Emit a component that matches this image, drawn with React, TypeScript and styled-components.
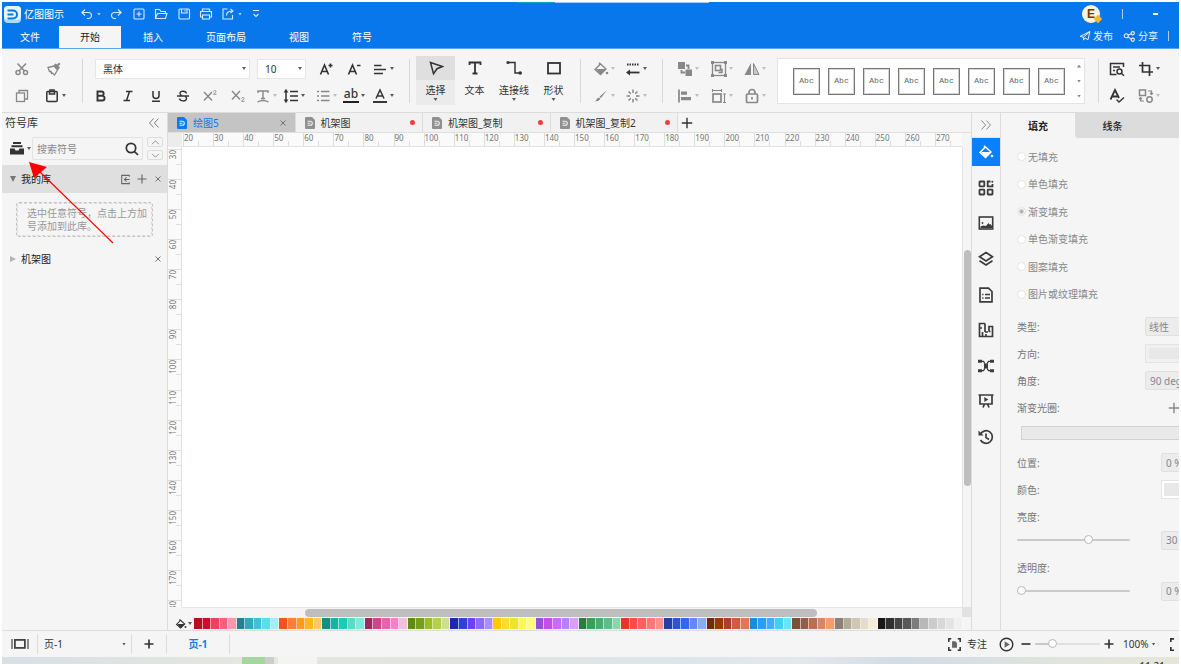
import React from "react";
import styled, { createGlobalStyle, css } from "styled-components";

const GlobalStyle = createGlobalStyle`
  *, *::before, *::after { box-sizing: border-box; }
  html, body, #root { height: 100%; }
  body {
    margin: 0;
    background: #fff;
    color: #333;
    font: 10px/14px "Noto Sans", "Noto Sans CJK SC", sans-serif;
    overflow: hidden;
  }
  button, input, select { font: inherit; color: inherit; margin: 0; padding: 0; border: 0; background: none; border-radius: 0; }
  select, input[type="radio"], input[type="range"] { appearance: none; }
  button { display: flex; align-items: center; justify-content: center; white-space: nowrap; }
  svg { display: block; flex: none; }
`;

/* ---------- icons ---------- */

type IconProps = { size?: number; w?: number; children: React.ReactNode };
const Icon = ({ size = 16, w = 1.4, children }: IconProps) => (
  <svg width={size} height={size} viewBox="0 0 16 16" fill="none" stroke="currentColor" strokeWidth={w} aria-hidden="true">
    {children}
  </svg>
);
const S = { fill: "currentColor", stroke: "none" };

const Undo = () => <Icon w={1.1}><path d="M6 3.5 2.8 6.5 6 9.5M3 6.5h6.5a3 3 0 0 1 0 6H8" /></Icon>;
const Redo = () => <Icon w={1.1}><path d="M10 3.5l3.2 3-3.2 3M13 6.5H6.500a3 3 0 0 0 0 6H8" /></Icon>;
const NewDoc = () => <Icon w={1.1}><rect x="3" y="3" width="10" height="10" rx="1" /><path d="M8 5.500v5M5.500 8h5" /></Icon>;
const Folder = () => <Icon w={1.1}><path d="M2.500 12.500v-9h4l1.500 2h4.500v2M2.500 12.500l2-5h9.500l-1.500 5z" /></Icon>;
const Save = () => <Icon w={1.1}><rect x="3" y="3" width="10.500" height="10" rx="1" /><path d="M5.500 3v4h5.500V3M9 4.200v1.400" /></Icon>;
const Print = () => <Icon w={1.1}><path d="M4.500 5.500V3h7v2.500M4.500 11H2.500V5.500h11V11h-2" /><rect x="4.500" y="9" width="7" height="4" /></Icon>;
const Export = () => <Icon w={1.1}><path d="M7.500 3H3v10h9.500V9M6.500 9.500c0-3 2-4.500 6-4.500M10.500 2.800 13 5l-2.500 2.200" /></Icon>;
const More = () => <Icon w={1.1}><path d="M5 4.500h6M5.500 8 8 10.500 10.500 8" /></Icon>;
const Send = () => <Icon size={12} w={1.3}><path d="M1.500 8.500 14.500 2l-2.500 11-4-2.500-2 3V9.500L14.500 2M1.500 8.500 6 9.500" /></Icon>;
const Share = () => <Icon size={13} w={1.3}><circle cx="4" cy="7" r="2.500" /><circle cx="12" cy="4" r="2" /><circle cx="12" cy="12" r="2" /><path d="M6.300 6.400 10 4.700M6 8.500l4.200 2.700" /></Icon>;

const Cut = () => <Icon w={1.500}><circle cx="4" cy="11.500" r="2" /><circle cx="11.500" cy="11.500" r="2" /><path d="M5 10 12 2.500M10.500 10 3.500 2.500" /></Icon>;
const Painter = () => <Icon w={1.3}><path d="M2 6.500 8 5l3.500 4-3 5-2-2-1 .5-.5-2-1.500 0z" /><path {...S} d="M7.500 4.500 12 9l2-2.500L12.500 5l2-2-1.500-1.500-2 2L9.500 2.500z" /></Icon>;
const Copy = () => <Icon w={1.3}><rect x="2.500" y="5" width="8" height="8.500" /><path d="M5 5V2.500h8.500V11h-3" /></Icon>;
const Paste = () => <Icon w={1.5}><rect x="2.800" y="3.500" width="10.400" height="10" rx="1" /><path d="M5.500 3.500V6h5V3.500M6 3.500V2h4v1.500" /></Icon>;
const FontUp = () => <Icon w={1.6}><path d="M2.500 13.500 6.500 4l4 9.500M4 10.500h5M10.500 4.500h4M12.500 2.500v4" /></Icon>;
const FontDown = () => <Icon w={1.6}><path d="M2.500 13.500 6.500 4l4 9.500M4 10.500h5M11 4.500h3.500" /></Icon>;
const AlignText = () => <Icon w={1.7}><path d="M2 4.500h7.500M2 8.500h12M2 12.500h9" /></Icon>;
const Bold = () => <Icon w={1.9}><path d="M4.500 3.500h4a2.100 2.100 0 0 1 0 4.300h-4zM4.500 7.800h4.700a2.300 2.300 0 0 1 0 4.700H4.500z" /></Icon>;
const Italic = () => <Icon w={1.5}><path d="M6 3.500h6.500M3.500 12.500H10M9.500 3.500l-3 9" /></Icon>;
const Underline = () => <Icon w={1.5}><path d="M5 3v4.500a3 3 0 0 0 6 0V3M4 13.200h8" /></Icon>;
const Strike = () => <Icon w={1.4}><path d="M11.500 5.500C11 2.500 5 2.500 5 5.200c0 1 .6 1.700 1.500 2.300M2 8h12M4.500 10.500c.5 3.200 7 3.200 7 .2 0-1-.5-1.700-1-2.200" /></Icon>;
const Super = () => <Icon w={1.4}><path d="M2 4l8 8.500M10 4l-8 8.500" /><path strokeWidth="0.900" d="M11.500 3.500c.3-1.400 2.800-1.200 2.500.3-.2.900-2.500 1.800-2.500 2.500h3" /></Icon>;
const Sub = () => <Icon w={1.4}><path d="M2 3l8 8.500M10 3l-8 8.500" /><path strokeWidth="0.900" d="M11.500 10.500c.3-1.400 2.800-1.200 2.500.3-.2.900-2.500 1.800-2.500 2.500h3" /></Icon>;
const TextArc = () => <Icon w={1.4}><path d="M3 5V3h10v2M8 3v7.500M6 10.500h4M2.500 14q5.500-3 11 0" /></Icon>;
const Spacing = () => <Icon w={1.500}><path d="M7 3.500h8M7 8h8M7 12.500h8M3 4v8" /><path {...S} d="M3 .8 5.300 4.500H.7zM3 15.200.7 11.500h4.600z" /></Icon>;
const Bullets = () => <Icon w={1.300}><path d="M6 3.500h8.500M6 8h8.500M6 12.500h8.500M2 3.500h2M2 8h2M2 12.500h2" /></Icon>;
const FontA = () => <Icon w={1.500}><path d="M4 10.500 8 2l4 8.500M5.500 8h5" /><path strokeWidth="1.800" stroke="#222" d="M1 14h14" /></Icon>;

const Cursor = () => <Icon w={1.500}><path d="M2.500 2.500l12 4-5.500 2.200-3.500 5z" /></Icon>;
const BigT = () => <Icon w={1.800}><path d="M2.500 5V2.500h11V5M8 2.500v11M5.500 13.500h5" /></Icon>;
const Connector = () => <Icon w={1.500}><path d="M3 2.500h6v10.500h4" /><circle cx="2" cy="2.500" r="1.600" {...S} /><circle cx="14.200" cy="13" r="1.800" {...S} /></Icon>;
const Shape = () => <Icon w={1.800}><rect x="2" y="3" width="12" height="10.500" /></Icon>;

const Bucket = ({ size = 16 }: { size?: number }) => (
  <Icon size={size} w={1.400}><path d="M6.500 1.500v3M7.500 3 2 8.500l5.500 5L13 8z" /><path {...S} d="M3 8h10l-5.500 5.500z" /><circle cx="14" cy="12" r="1.300" {...S} /></Icon>
);
const LineStyle = () => <Icon w={1.800}><path strokeDasharray="1.500 1" d="M2 3.500H14.500" /><path d="M4 11.500h10.500" /><path {...S} d="M1 11.500l4-3v6z" /></Icon>;
const Brush = () => <Icon w={1}><path {...S} d="M14 2 8 10 6.500 8.700zM6 9.500l1.300 1.300C6.500 13 4 13.500 2 13.500c1.500-1 2-4 4-4z" /></Icon>;
const Spark = () => <Icon w={1.500}><path d="M8 1.500v3.500M8 11v3.500M1.500 8H5M11 8h3.500M3.500 3.500l2.300 2.300M10.200 10.200l2.300 2.300M12.500 3.500l-2.300 2.300M5.800 10.200l-2.300 2.300" /></Icon>;
const Arrange = () => <Icon w={1.800}><rect x="1" y="1" width="7" height="7" {...S} /><path d="M9 4.500h2.500v3.500M4.500 9v2.500h3.500" /><rect x="8.500" y="8.500" width="6.500" height="6.500" {...S} /></Icon>;
const GroupIcon = () => <Icon w={1.300}><rect x="1.500" y="1.500" width="13" height="13" /><rect x="4.500" y="4.500" width="5" height="5" strokeWidth="1.600" /><path strokeWidth="1.600" d="M11 7.500v4H7.500" /><path {...S} d="M0 0h3v3H0zM13 0h3v3h-3zM0 13h3v3H0zM13 13h3v3h-3z" /></Icon>;
const Mirror = () => <Icon w={1}><path d="M9.500 2.500V13.500h5.500z" fill="currentColor" fillOpacity="0.400" /><path {...S} d="M7 2v12H.5z" /></Icon>;
const AlignShape = () => <Icon w={1.700}><path d="M2 1.500v13" /><path {...S} d="M4 3.500h6v3.200H4zM4 9h10v3.200H4z" /></Icon>;
const SizeIcon = () => <Icon w={1.700}><rect x="2" y="6" width="8" height="8" /><path strokeWidth="1.100" d="M1.500 2.500h9M1.500 1v3M10.500 1v3M13.500 6v8.500M12 6h3M12 14.500h3" /></Icon>;
const LockIcon = () => <Icon w={1.700}><rect x="2.500" y="6" width="11" height="8.500" rx="1" /><path d="M5 6V4.500a3 3 0 0 1 6 0V6" /><path d="M8 9v2.500" /></Icon>;
const FindIcon = () => <Icon w={1.500}><path d="M14.500 6V2.500h-13v11h6M4 6h7M4 9.500h2M12.500 12.500l2.500 2.200" /><circle cx="10.500" cy="10.500" r="2.500" /></Icon>;
const Crop = () => <Icon w={1.700}><path d="M4.500 1v10H15M1 4.500h10.500V15" /></Icon>;
const Spell = () => <Icon w={1.800}><path d="M1.500 11.500 6 2l4 8M3.500 8.500h5" /><path strokeWidth="1.400" d="M7.500 11.500l2.500 2.500 5-4.500" /></Icon>;
const Replace = () => <Icon w={1.500}><rect x="1.500" y="2" width="6" height="5.500" /><circle cx="11.500" cy="11.500" r="2.700" /><path d="M10 3h3.500v3.500M12 5l1.500 1.500L15 5M6 13H2.500V9.500M1 11l1.500-1.500L4 11" strokeWidth="1.200" /></Icon>;

const Library = () => <Icon><path {...S} d="M4 1h8v2H4zM2.500 4.200h11v2h-11zM1 7.500h4.500L6.500 9.500h3L10.500 7.500H15V13.500H1z" /></Icon>;
const Search = () => <Icon w={1.700}><circle cx="7" cy="7" r="4.700" /><path d="M10.300 10.300 14 14" /></Icon>;
const Import = () => <Icon size={11} w={1.500}><path d="M13.500 4V2h-11v12h11v-2M14 8H7M9.500 5 6.500 8l3 3" /></Icon>;
const Plus = ({ size = 12, w = 1.600 }: { size?: number; w?: number }) => <Icon size={size} w={w}><path d="M8 2v12M2 8h12" /></Icon>;
const Minus = () => <Icon size={12} w={2.200}><path d="M2 8h12" /></Icon>;
const Close = () => <Icon size={10} w={1.400}><path d="M4 4l8 8M12 4l-8 8" /></Icon>;
const Collapse = () => <Icon size={12} w={1.300}><path d="M7.500 2 2 8l5.500 6M14 2 8.500 8l5.500 6" /></Icon>;
const Expand = () => <Icon size={12} w={1.300}><path d="M2 2l5.500 6L2 14M8.500 2 14 8l-5.500 6" /></Icon>;
const Up = () => <Icon size={9} w={1.600}><path d="M2 11l6-6 6 6" /></Icon>;
const Down = () => <Icon size={9} w={1.600}><path d="M2 5l6 6 6-6" /></Icon>;
const DocIcon = () => (
  <svg width="10" height="12" viewBox="0 0 10 12" aria-hidden="true">
    <path fill="currentColor" d="M1 0h6l3 3v8a1 1 0 0 1-1 1H1a1 1 0 0 1-1-1V1a1 1 0 0 1 1-1z" />
    <path fill="none" stroke="#f0f0f0" strokeWidth="1.100" d="M2.500 4.200h2.800a1.900 1.900 0 0 1 0 4H2.500M2.500 6.200h2.800" />
  </svg>
);

const GridIcon = () => <Icon w={1.800}><rect x="1.500" y="1.500" width="4.800" height="4.800" rx=".5" /><rect x="1.500" y="9.700" width="4.800" height="4.800" rx=".5" /><rect x="9.700" y="9.700" width="4.800" height="4.800" rx=".5" /><path d="M12.500 1.500H9.700v4.800h4.800V4" /><circle cx="14.300" cy="1.800" r="1" {...S} /></Icon>;
const Picture = () => <Icon w={1.600}><rect x="1.300" y="2" width="13.400" height="12" /><path {...S} d="M2.500 13v-1.500l2.500-1 3 .5 2.500-3 1 1.500 1-.5 1.500 2v2z" /><circle cx="4.500" cy="8" r=".9" {...S} /></Icon>;
const Layers = () => <Icon w={1.700}><path d="M8 1.500 14.500 5.700 8 10 1.500 5.700zM1.500 9.800 8 14l6.500-4.200" /></Icon>;
const Page = () => <Icon w={1.700}><path d="M2 1.200h8.500L14 4.500v10.300H2z" /><path d="M7 7.500h5M7 11h5M4.200 7.500h1.300M4.200 11h1.300" strokeWidth="1.400" /></Icon>;
const FloorPlan = () => <Icon w={1.700}><path d="M7 1.500H1.500v13h13V4.500H11v5M7 1.500V10M1.500 6H4M4.500 14v-4M7 10h3M11 9.500h1.500M8 14v-2" /></Icon>;
const Mind = () => <Icon w={1.300}><path d="M3 3.300h2.500l2.500 4 2.500-4H13M3 12.700h2.500l2.500-4 2.500 4H13" /><path {...S} d="M0 1.800h4v3H0zM12 1.800h4v3h-4zM0 11.200h4v3H0zM12 11.200h4v3h-4zM6 6h4v4H6z" /></Icon>;
const Present = () => <Icon w={1.700}><path d="M.5 2h15M2 2v9h12V2M5 14.500 6.500 11M11 14.500 9.500 11" /><path {...S} d="M6.300 4l4 2.500-4 2.500z" /></Icon>;
const History = () => <Icon w={1.700}><path d="M2.500 5a6.300 6.300 0 1 1 0 6M8 4.500V8.500l3 2" /><path {...S} d="M.5 1.500v5h5z" /></Icon>;

const Pages = () => <svg width="18" height="12" viewBox="0 0 18 12" fill="none" stroke="#444" aria-hidden="true"><rect x="3.900" y="1.900" width="10" height="8" strokeWidth="1.800" /><path d="M1 1v10M17 1v10" strokeWidth="1.200" /></svg>;
const Focus = () => <Icon size={13} w={1.900}><path d="M1 5V1h3M12 1h3v4M15 11v4h-3M4 15H1v-4" /><path {...S} fill="#666" d="M5 4h4l2 2v6H5z" /></Icon>;
const PlayIcon = () => <Icon size={15} w={1.500}><circle cx="8" cy="8" r="6.700" /><path {...S} fill="#666" d="M6 4.500l5.500 3.500L6 11.500z" /></Icon>;
const FullScreen = () => <Icon size={13} w={2}><path d="M1 5V1h4M11 1h4v4M15 11v4h-4M5 15H1v-4" /></Icon>;

const Caret = styled.i<{ $up?: boolean; $dim?: boolean }>`
  flex: none;
  width: 6px;
  height: 3px;
  background: ${(p) => (p.$dim ? "#b0b0b0" : "currentColor")};
  opacity: 0.8;
  clip-path: ${(p) => (p.$up ? "polygon(1px 3px, 3px 0, 5px 3px)" : "polygon(1px 0, 5px 0, 3px 3px)")};
`;

/* ---------- shell ---------- */

const Shell = styled.div`
  position: relative;
  display: flex;
  flex-direction: column;
  height: 100%;
  padding: 2px 2px 0;
  overflow: hidden;
`;

const Header = styled.header`
  position: relative;
  display: flex;
  justify-content: space-between;
  background: #0977ec;
  color: #fff;
  border-bottom: 1px solid #5ba4f3;
  overflow: hidden;
`;
const Progress = styled.div`
  position: absolute;
  top: 0;
  left: 515px;
  width: 192px;
  height: 1px;
  background: linear-gradient(90deg, #0ea5c8 38px, #a9cbf5 38px);
`;
const TitleRow = styled.div`
  display: flex;
  align-items: center;
  height: 24px;
  padding-left: 2px;
`;
const AppName = styled.span`
  width: 55px;
  margin-left: 3px;
`;
const Quick = styled.div`
  display: grid;
  grid-template-columns: 29px 23px 22px 23px 22px 22px 28px 16px;
  color: #d9e9fd;
`;
const RibbonTabs = styled.nav`
  display: flex;
  gap: 1px;
  height: 22px;
`;
const RibbonTab = styled.button<{ $on?: boolean }>`
  height: 22px;
  padding: 0 21px;
  &:first-child { padding: 0 18px; }
  ${(p) => p.$on && css`background: #f5f5f5; color: #222;`}
`;
const Account = styled.div`
  width: 100px;
`;
const AccountRow = styled.div`
  display: flex;
  align-items: center;
  height: 24px;
  padding-left: 3px;
  & + & { height: 20px; padding-left: 0; gap: 2px; }
`;
const Avatar = styled.span`
  position: relative;
  width: 18px;
  height: 18px;
  border-radius: 50%;
  background: #fdf3da;
  color: #6a3d08;
  font: bold 12px/18px "Liberation Sans", sans-serif;
  text-align: center;
`;
const Badge = styled.i`
  position: absolute;
  right: -1px;
  bottom: 1px;
  width: 6px;
  height: 6px;
  background: #fdb92e;
  transform: rotate(45deg);
`;
const Bar = styled.i<{ $gap: number }>`
  width: 1px;
  height: 10px;
  margin-left: ${(p) => p.$gap}px;
  background: #a9cdf8;
`;
const Minimize = styled.button`
  width: 5px;
  height: 2px;
  margin-left: 30px;
  background: #fff;
`;
const LinkButton = styled.button`
  gap: 2px;
  margin-right: 8px;
  color: #e8f2fe;
`;

/* ---------- ribbon ---------- */

const Ribbon = styled.div`
  display: flex;
  flex: none;
  height: 64px;
  background: #f5f5f5;
  border-bottom: 1px solid #dcdcdc;
  overflow: hidden;
`;
const Group = styled.section<{ $l: number; $r: number }>`
  display: flex;
  flex: none;
  flex-direction: column;
  gap: 6px;
  padding: 9px ${(p) => p.$r}px 0 ${(p) => p.$l}px;
`;
const Sep = styled.i`
  flex: none;
  width: 1px;
  height: 44px;
  margin-top: 10px;
  background: #d8d8d8;
`;
const ToolRow = styled.div<{ $cols: string }>`
  display: grid;
  align-items: center;
  height: 21px;
  grid-template-columns: ${(p) => p.$cols};
`;
const ToolButton = styled.button<{ $dim?: boolean }>`
  justify-content: flex-start;
  gap: 1px;
  height: 20px;
  color: ${(p) => (p.$dim ? "#888" : "inherit")};
`;
const Highlight = styled.span`
  width: 16px;
  height: 15px;
  border-bottom: 2px solid #222;
  font-size: 12px;
  line-height: 12px;
  font-weight: 500;
  text-align: center;
`;
const Picker = styled.label`
  display: flex;
  align-items: center;
  height: 20px;
  margin: 0 7px 0 2px;
  padding: 0 2px 0 7px;
  background: #fff;
  border: 1px solid #e6e6e6;
  select { flex: 1; min-width: 0; }
  & + & { margin: 0 12px 0 0; }
`;
const BigTools = styled.div`
  display: grid;
  grid-template-columns: 39px 39px 40px 39px;
  margin: 7px 7px 0 6px;
  flex: none;
`;
const BigTool = styled.button<{ $on?: boolean }>`
  flex-direction: column;
  justify-content: flex-start;
  height: 49px;
  ${(p) => p.$on && css`background: linear-gradient(#dfdfdf 24px, #ebebeb 24px);`}
  svg { margin: 4px 0; }
  span { margin: 3px 0 1px; line-height: 14px; }
`;
const Gallery = styled.div`
  display: flex;
  flex: none;
  align-items: center;
  gap: 8px;
  width: 308px;
  height: 46px;
  margin: 9px 13px 0 0;
  padding-left: 15px;
  background: #fff;
  border: 1px solid #e4e4e4;
`;
const StyleBox = styled.button`
  width: 27px;
  height: 27px;
  border: 1px solid #777;
  outline: 1px solid #d4d4d4;
  outline-offset: -2px;
  color: #666;
  font: 8px/12px "Liberation Mono", monospace;
`;
const GalleryNav = styled.div`
  display: flex;
  flex-direction: column;
  gap: 12px;
  margin-left: 3px;
  color: #666;
`;

const Tool = ({ icon, caret, dim, label }: { icon: React.ReactNode; caret?: boolean; dim?: boolean; label: string }) => (
  <ToolButton $dim={dim} aria-label={label}>
    {icon}
    {caret && <Caret $dim={dim} />}
  </ToolButton>
);

/* ---------- body ---------- */

const Body = styled.main`
  display: flex;
  flex: 1;
  min-height: 0;
`;
const Side = styled.aside`
  display: flex;
  flex: none;
  flex-direction: column;
  width: 166px;
  background: #f5f5f5;
  border-right: 1px solid #dcdcdc;
`;
const SideHead = styled.div`
  display: flex;
  align-items: center;
  justify-content: space-between;
  height: 19px;
  padding: 0 7px 0 3px;
  font-size: 11px;
  button { color: #777; }
`;
const SearchRow = styled.div`
  display: flex;
  align-items: center;
  height: 33px;
  padding: 0 4px 0 7px;
`;
const SearchBox = styled.label`
  display: flex;
  align-items: center;
  width: 111px;
  height: 23px;
  padding: 0 2px 0 4px;
  border: 1px solid #e2e2e2;
  border-radius: 2px;
  input { flex: 1; min-width: 0; outline: 0; }
  input::placeholder { color: #888; }
`;
const Stepper = styled.div`
  display: grid;
  gap: 3px;
  margin-left: auto;
  button { width: 16px; height: 10px; border: 1px solid #ddd; border-radius: 2px; color: #888; }
`;
const LibRow = styled.div<{ $on?: boolean }>`
  display: flex;
  align-items: center;
  height: 28px;
  padding: 0 4px 0 8px;
  gap: 5px;
  color: #222;
  background: ${(p) => (p.$on ? "#dfdfdf" : "transparent")};
  span { margin-right: auto; }
  button { color: #666; }
`;
const Twist = styled.i<{ $open?: boolean }>`
  width: 6px;
  height: 6px;
  background: ${(p) => (p.$open ? "#777" : "#b4b4b4")};
  clip-path: ${(p) => (p.$open ? "polygon(0 0, 100% 0, 50% 100%)" : "polygon(0 0, 100% 50%, 0 100%)")};
`;
const DropHint = styled.p`
  margin: 9px 14px 8px;
  padding: 4px 0 3px 10px;
  border: 1px dashed #c4c4c4;
  outline: 1px dashed #dadada;
  outline-offset: -2px;
  border-radius: 3px;
  color: #999;
  line-height: 13px;
  white-space: nowrap;
`;
const Pointer = styled.svg`
  position: absolute;
  left: 28px;
  top: 160px;
`;

const Center = styled.section`
  display: flex;
  flex: 1;
  flex-direction: column;
  min-width: 0;
  background: #f5f5f5;
`;
const DocTabs = styled.div`
  display: flex;
  flex: none;
  height: 20px;
  border-bottom: 1px solid #e0e0e0;
`;
const TabStrip = styled.div`
  display: grid;
  width: 510px;
  grid-template-columns: repeat(4, 1fr);
`;
const DocTab = styled.button<{ $on?: boolean }>`
  justify-content: flex-start;
  gap: 6px;
  padding: 0 7px 0 9px;
  border-right: 1px solid #dcdcdc;
  background: ${(p) => (p.$on ? "#c4c4c4" : "#f1f1f1")};
  color: ${(p) => (p.$on ? "#0a7bf2" : "#333")};
  svg { color: ${(p) => (p.$on ? "#0a7bf2" : "#909090")}; }
  svg:last-child { color: #666; }
  span { margin-right: auto; }
`;
const Dirty = styled.i`
  width: 5px;
  height: 5px;
  border-radius: 50%;
  background: #f93a3a;
`;
const AddTab = styled.button`
  width: 18px;
`;
const Stage = styled.div`
  display: grid;
  flex: 1;
  min-height: 0;
  grid-template: 14px 1fr 10px / 14px 1fr 9px;
`;
const Corner = styled.i<{ $c: string }>`
  background: ${(p) => p.$c};
`;
const HRuler = styled.div`
  overflow: hidden;
  background: #fafafa;
  border-bottom: 1px solid #e2e2e2;
  color: #777;
  font-size: 8px;
  line-height: 10px;
`;
const HTrack = styled.div`
  display: grid;
  width: 783px;
  height: 100%;
  padding-left: 1px;
  grid-template-columns: repeat(26, 1fr);
`;
const HCell = styled.span`
  border-left: 1px solid #ddd;
  background: linear-gradient(#ddd, #ddd) 14px 100% / 1px 5px no-repeat;
`;
const VRuler = styled(HRuler)`
  border-bottom: 0;
  border-right: 1px solid #e2e2e2;
`;
const VTrack = styled.div`
  display: grid;
  height: 483px;
  padding-top: 2px;
  grid-template-rows: repeat(16, 1fr);
`;
const VCell = styled.span`
  display: flex;
  align-items: flex-start;
  border-top: 1px solid #ddd;
  background: linear-gradient(#ddd, #ddd) 100% 14px / 5px 1px no-repeat;
  b { font-weight: normal; writing-mode: vertical-rl; transform: rotate(180deg); }
`;
const VScroll = styled.div`
  padding: 103px 0 0 1px;
  border-left: 1px solid #e2e2e2;
  i { display: block; height: 236px; border-radius: 4px; background: #bebebe; }
`;
const HScroll = styled.div`
  padding: 1px 145px 1px 123px;
  border-top: 1px solid #e6e6e6;
  i { display: block; height: 8px; border-radius: 4px; background: #bebebe; }
`;
const Palette = styled.div`
  display: flex;
  align-items: center;
  flex: none;
  height: 13px;
  padding: 0 8px 0 7px;
`;
const PaletteButton = styled.button`
  width: 19px;
  justify-content: flex-start;
`;
const Swatches = styled.div`
  display: flex;
  flex: 1;
`;
const Swatch = styled.button<{ $c: string }>`
  flex: 1;
  height: 11px;
  background: ${(p) => p.$c};
  border-right: 1px solid rgba(255, 255, 255, 0.6);
`;

/* ---------- right side ---------- */

const Strip = styled.nav`
  flex: none;
  width: 30px;
  background: #f5f5f5;
  border: solid #dcdcdc;
  border-width: 0 1px;
`;
const StripHead = styled.button`
  width: 100%;
  height: 25px;
  color: #888;
  border-bottom: 1px solid #e4e4e4;
`;
const StripList = styled.div`
  display: flex;
  flex-direction: column;
  justify-content: space-between;
  height: 313px;
  color: #3c3c3c;
`;
const StripButton = styled.button<{ $on?: boolean }>`
  height: 28px;
  background: ${(p) => (p.$on ? "#0a80ff" : "none")};
  color: ${(p) => (p.$on ? "#fff" : "inherit")};
`;
const Panel = styled.aside`
  flex: none;
  width: 178px;
  overflow: hidden;
  background: #f5f5f5;
  color: #888;
`;
const PanelTabs = styled.div`
  display: grid;
  width: 225px;
  height: 25px;
  grid-template-columns: 74px 75px 76px;
`;
const PanelTab = styled.button<{ $on?: boolean }>`
  color: #222;
  font-weight: ${(p) => (p.$on ? 700 : 500)};
  background: ${(p) => (p.$on ? "#f5f5f5" : "#dcdcdc")};
  &:nth-child(2) { border-bottom-left-radius: 3px; }
`;
const PanelBody = styled.div`
  width: 225px;
  padding: 5px 16px 0;
`;
const Radios = styled.div`
  display: grid;
  height: 165px;
  margin-bottom: 5px;
  grid-template-rows: repeat(6, 1fr);
`;
const Radio = styled.label`
  display: flex;
  align-items: center;
  gap: 2px;
  input {
    width: 9px;
    height: 9px;
    border: 1px solid #e4e4e4;
    border-radius: 50%;
    background: #fff;
  }
  input:checked { background: radial-gradient(#b0b0b0 1px, #f5f5f5 3px); }
`;
const Field = styled.div<{ $narrow?: boolean; $slider?: boolean }>`
  display: grid;
  align-items: center;
  height: ${(p) => (p.$slider ? 20 : 27)}px;
  margin-bottom: ${(p) => (p.$slider ? 4 : 0)}px;
  grid-template-columns: ${(p) => (p.$narrow || p.$slider ? "144px 49px" : "128px 65px")};
  input[type="range"] { width: 113px; }
  input[type="text"], select {
    height: 19px;
    padding: 0 4px;
    min-width: 0;
    width: 100%;
    border: 1px solid #e0e0e0;
    border-radius: 2px;
    background: #ececec;
  }
  select { padding: 0 3px; }
`;
const FieldLabel = styled.label`
  color: #777;
`;
const Preview = styled.button<{ $white?: boolean }>`
  height: 19px;
  border: ${(p) => (p.$white ? "3px solid #fff" : "4px solid #f0f0f0")};
  outline: 1px solid #e4e4e4;
  outline-offset: -1px;
  background: #e8e8e8;
`;
const AddStop = styled.button`
  justify-content: flex-start;
  padding-left: 6px;
`;
const StopBar = styled.div`
  height: 14px;
  margin: 5px 0 9px 4px;
  border: 1px solid #d2d2d2;
  background: #e9e9e9;
`;
const Range = styled.input<{ $zoom?: boolean }>`
  display: block;
  height: 12px;
  &::-webkit-slider-runnable-track {
    height: 2px;
    border-radius: 1px;
    background: ${(p) => (p.$zoom ? "linear-gradient(90deg, #c8c8c8 25%, #e0e0e0 25%)" : "#cacaca")};
  }
  &::-webkit-slider-thumb {
    appearance: none;
    width: 9px;
    height: 9px;
    margin-top: -4px;
    border: 1px solid #b8b8b8;
    border-radius: 50%;
    background: #fff;
  }
`;

/* ---------- footer ---------- */

const Status = styled.footer`
  display: flex;
  flex: none;
  align-items: center;
  height: 27px;
  background: #f5f5f5;
  border-top: 1px solid #dcdcdc;
  overflow: hidden;
`;
const Cell = styled.div<{ $w: number }>`
  display: flex;
  align-items: center;
  justify-content: center;
  width: ${(p) => p.$w}px;
  height: 20px;
  border-right: 1px solid #dcdcdc;
`;
const PageSelect = styled(Cell)`
  padding: 0 4px 0 6px;
  select { flex: 1; min-width: 0; }
`;
const PageTab = styled.button`
  color: #0a7bf2;
  font-weight: 700;
`;
const StatusRight = styled.div`
  display: flex;
  flex: none;
  align-items: center;
  width: 231px;
  margin-left: auto;
  button { flex: none; }
`;
const FocusButton = styled.button`
  gap: 6px;
  margin-right: 12px;
`;
const ZoomOut = styled.button`
  margin-left: 6px;
`;
const ZoomRange = styled(Range)`
  width: 65px;
  margin: 0 3px;
`;
const ZoomLevel = styled.button`
  gap: 2px;
  margin: 0 14px 0 8px;
`;
const Taskbar = styled.div`
  display: flex;
  flex: none;
  justify-content: space-between;
  height: 7px;
  overflow: hidden;
  background: linear-gradient(90deg, #d8e0e4, #e4e6e0 20%, #e2e4e0 40%, #dce6ea 58%, #e4e8ea 68%, #d2dce6 76%, #e0e4dc 90%, #e6e6da);
`;
const Tasks = styled.div`
  width: 75px;
  margin-left: 240px;
  background: linear-gradient(90deg, #a5d6a0 23px, #cdcdcb 23px 32px, #e6e8e4 32px 36px, #f4f4f3 36px);
`;
const Clock = styled.time`
  margin-right: 14px;
  padding-top: 2px;
  color: #222;
`;

const palette = [
  "#b31020 #cf0a30 #ee4060 #f66080 #f79aac",
  "#24808f #36a5c0 #40bedb #5cdcf0 #a0f0fa",
  "#f4511e #ff7d37 #ff9a1e #ffb81c #ffc860",
  "#109080 #14b5a0 #18cdb5 #60d8c8 #80e8dc",
  "#9c2a60 #c84890 #e465ac #f880c8 #f0c0dc",
  "#5f8a14 #789e20 #9abc28 #b4d04c #d0de90",
  "#1c28b0 #3040d8 #6c40f4 #8c6cf8 #a890fa",
  "#ffca00 #ffdb2c #eee428 #fcf84c #fcfc80",
  "#9850d8 #c050e8 #cc68fc #b880fc #d8a0fc",
  "#2a7c40 #38a055 #4cac70 #60bc88 #90d4a8",
  "#ea3428 #ff4a40 #ff6060 #ff7878 #ff9088",
  "#2440a4 #2c54d0 #3068f4 #6488fc #88acf0",
  "#702c00 #983800 #a84028 #d05c40 #e07858",
  "#1c8cd8 #2c9cf4 #44acfc #40d0fc #68e4fc",
  "#7c5038 #985c44 #b87050 #d88860 #f49c6c",
  "#8c8078 #b0ac98 #ccc8b4 #e4dccc #f4ecd8",
  "#181818 #303030 #444444 #585858 #7c7c7c",
  "#b8b8b8 #cccccc #d8d8d8 #e4e4e4 #f0f0f0",
].flatMap((row) => row.split(" "));

const fills = ["无填充", "单色填充", "渐变填充", "单色渐变填充", "图案填充", "图片或纹理填充"];
const docs = ["机架图", "机架图_复制", "机架图_复制2"];
const steps = (from: number, count: number) => Array.from({ length: count }, (_, i) => from + i * 10);
const panels: [string, React.ReactNode][] = [
  ["填充", <Bucket key="i" />], ["符号", <GridIcon key="i" />], ["图片", <Picture key="i" />],
  ["图层", <Layers key="i" />], ["页面", <Page key="i" />], ["平面图", <FloorPlan key="i" />],
  ["导图", <Mind key="i" />], ["演示", <Present key="i" />], ["历史", <History key="i" />],
];

export default function App() {
  return (
    <Shell>
      <GlobalStyle />
      <Header>
        <Progress />
        <div>
          <TitleRow>
            <svg width="17" height="17" viewBox="0 0 17 17" fill="none" aria-hidden="true">
              <rect width="17" height="17" rx="4" fill="#a8dcff" />
              <rect width="17" height="14" rx="4" fill="#e6f5ff" />
              <path d="M3.500 4.500H9a4 4 0 0 1 0 8H3.500M3.500 8.500h6" stroke="#0977ec" strokeWidth="2" />
            </svg>
            <AppName>亿图图示</AppName>
            <Quick>
              <Tool label="撤销" icon={<Undo />} caret />
              <Tool label="重做" icon={<Redo />} />
              <Tool label="新建" icon={<NewDoc />} />
              <Tool label="打开" icon={<Folder />} />
              <Tool label="保存" icon={<Save />} />
              <Tool label="打印" icon={<Print />} />
              <Tool label="导出" icon={<Export />} caret />
              <Tool label="更多" icon={<More />} />
            </Quick>
          </TitleRow>
          <RibbonTabs>
            <RibbonTab>文件</RibbonTab>
            <RibbonTab $on>开始</RibbonTab>
            <RibbonTab>插入</RibbonTab>
            <RibbonTab>页面布局</RibbonTab>
            <RibbonTab>视图</RibbonTab>
            <RibbonTab>符号</RibbonTab>
          </RibbonTabs>
        </div>
        <Account>
          <AccountRow>
            <Avatar>E<Badge /></Avatar>
            <Bar $gap={22} />
            <Minimize aria-label="最小化" />
          </AccountRow>
          <AccountRow>
            <LinkButton><Send />发布</LinkButton>
            <LinkButton><Share />分享</LinkButton>
            <Bar $gap={0} />
          </AccountRow>
        </Account>
      </Header>

      <Ribbon>
        <Group $l={12} $r={12}>
          <ToolRow $cols="32px 24px">
            <Tool label="剪切" icon={<Cut />} dim />
            <Tool label="格式刷" icon={<Painter />} dim />
          </ToolRow>
          <ToolRow $cols="30px 26px">
            <Tool label="复制" icon={<Copy />} dim />
            <Tool label="粘贴" icon={<Paste />} caret />
          </ToolRow>
        </Group>
        <Sep />
        <Group $l={10} $r={14}>
          <ToolRow $cols="164px 61px 28px 26px 23px">
            <Picker>
              <select aria-label="字体"><option>黑体</option></select><Caret />
            </Picker>
            <Picker>
              <select aria-label="字号"><option>10</option></select><Caret />
            </Picker>
            <Tool label="增大字号" icon={<FontUp />} />
            <Tool label="减小字号" icon={<FontDown />} />
            <Tool label="对齐" icon={<AlignText />} caret />
          </ToolRow>
          <ToolRow $cols="27px 28px 27px 27px 28px 25px 28px 32px 28px 29px 23px">
            <Tool label="加粗" icon={<Bold />} />
            <Tool label="斜体" icon={<Italic />} />
            <Tool label="下划线" icon={<Underline />} />
            <Tool label="删除线" icon={<Strike />} />
            <Tool label="上标" icon={<Super />} dim />
            <Tool label="下标" icon={<Sub />} dim />
            <Tool label="弧形文字" icon={<TextArc />} dim caret />
            <Tool label="行距" icon={<Spacing />} caret />
            <Tool label="项目符号" icon={<Bullets />} dim caret />
            <Tool label="突出显示" icon={<Highlight>ab</Highlight>} caret />
            <Tool label="字体颜色" icon={<FontA />} caret />
          </ToolRow>
        </Group>
        <Sep />
        <BigTools>
          <BigTool $on><Cursor /><span>选择</span><Caret /></BigTool>
          <BigTool><BigT /><span>文本</span></BigTool>
          <BigTool><Connector /><span>连接线</span><Caret /></BigTool>
          <BigTool><Shape /><span>形状</span><Caret /></BigTool>
        </BigTools>
        <Sep />
        <Group $l={12} $r={14}>
          <ToolRow $cols="32px 23px">
            <Tool label="填充" icon={<Bucket />} dim caret />
            <Tool label="线型" icon={<LineStyle />} caret />
          </ToolRow>
          <ToolRow $cols="32px 23px">
            <Tool label="画笔" icon={<Brush />} dim caret />
            <Tool label="效果" icon={<Spark />} dim caret />
          </ToolRow>
        </Group>
        <Sep />
        <Group $l={14} $r={10}>
          <ToolRow $cols="34px 33px 23px">
            <Tool label="排列" icon={<Arrange />} dim caret />
            <Tool label="组合" icon={<GroupIcon />} dim caret />
            <Tool label="翻转" icon={<Mirror />} dim caret />
          </ToolRow>
          <ToolRow $cols="34px 33px 23px">
            <Tool label="对齐形状" icon={<AlignShape />} dim caret />
            <Tool label="大小" icon={<SizeIcon />} dim caret />
            <Tool label="锁定" icon={<LockIcon />} dim caret />
          </ToolRow>
        </Group>
        <Gallery>
          {Array.from({ length: 8 }, (_, i) => <StyleBox key={i}>Abc</StyleBox>)}
          <GalleryNav><Caret $up /><Caret /><Caret /></GalleryNav>
        </Gallery>
        <Sep />
        <Group $l={10} $r={0}>
          <ToolRow $cols="29px 23px">
            <Tool label="查找" icon={<FindIcon />} />
            <Tool label="裁剪" icon={<Crop />} caret />
          </ToolRow>
          <ToolRow $cols="29px 23px">
            <Tool label="拼写检查" icon={<Spell />} />
            <Tool label="替换形状" icon={<Replace />} dim caret />
          </ToolRow>
        </Group>
      </Ribbon>

      <Body>
        <Side>
          <SideHead>符号库<button aria-label="收起"><Collapse /></button></SideHead>
          <SearchRow>
            <Tool label="符号库菜单" icon={<Library />} caret />
            <SearchBox>
              <input type="text" placeholder="搜索符号" aria-label="搜索符号" />
              <Search />
            </SearchBox>
            <Stepper>
              <button aria-label="上一个"><Up /></button>
              <button aria-label="下一个"><Down /></button>
            </Stepper>
          </SearchRow>
          <LibRow $on>
            <Twist $open /><span>我的库</span>
            <button aria-label="导入"><Import /></button>
            <button aria-label="添加"><Plus w={1.500} /></button>
            <button aria-label="关闭我的库"><Close /></button>
          </LibRow>
          <DropHint>选中任意符号，点击上方加<br />号添加到此库。</DropHint>
          <LibRow>
            <Twist /><span>机架图</span>
            <button aria-label="关闭机架图"><Close /></button>
          </LibRow>
        </Side>

        <Center>
          <DocTabs>
            <TabStrip>
              <DocTab $on><DocIcon /><span>绘图5</span><Close /></DocTab>
              {docs.map((d) => <DocTab key={d}><DocIcon /><span>{d}</span><Dirty /></DocTab>)}
            </TabStrip>
            <AddTab aria-label="新建绘图"><Plus size={14} /></AddTab>
          </DocTabs>
          <Stage>
            <Corner $c="#ececec" />
            <HRuler><HTrack>{steps(20, 26).map((n) => <HCell key={n}>{n}</HCell>)}</HTrack></HRuler>
            <Corner $c="#f5f5f5" />
            <VRuler><VTrack>{steps(30, 16).map((n) => <VCell key={n}><b>{n}</b></VCell>)}</VTrack></VRuler>
            <Corner $c="#fff" />
            <VScroll><i /></VScroll>
            <Corner $c="#f5f5f5" />
            <HScroll><i /></HScroll>
            <Corner $c="#e2e2e2" />
          </Stage>
          <Palette>
            <PaletteButton aria-label="填充颜色"><Bucket size={12} /><Caret /></PaletteButton>
            <Swatches>{palette.map((c, i) => <Swatch key={i} $c={c} aria-label={c} />)}</Swatches>
          </Palette>
        </Center>

        <Strip>
          <StripHead aria-label="收起面板"><Expand /></StripHead>
          <StripList>
            {panels.map(([name, icon], i) => <StripButton key={name} $on={i === 0} aria-label={name}>{icon}</StripButton>)}
          </StripList>
        </Strip>

        <Panel>
          <PanelTabs>
            <PanelTab $on>填充</PanelTab>
            <PanelTab>线条</PanelTab>
            <PanelTab />
          </PanelTabs>
          <PanelBody>
            <Radios>
              {fills.map((f, i) => <Radio key={f}><input type="radio" name="fill" defaultChecked={i === 2} />{f}</Radio>)}
            </Radios>
            <Field><FieldLabel htmlFor="type">类型:</FieldLabel><select id="type"><option>线性</option></select></Field>
            <Field><FieldLabel htmlFor="dir">方向:</FieldLabel><Preview id="dir" /></Field>
            <Field><FieldLabel htmlFor="angle">角度:</FieldLabel><input type="text" id="angle" defaultValue="90 deg" /></Field>
            <Field $narrow><FieldLabel htmlFor="stop">渐变光圈:</FieldLabel><AddStop id="stop" aria-label="添加光圈"><Plus size={14} /></AddStop></Field>
            <StopBar />
            <Field $narrow><FieldLabel htmlFor="pos">位置:</FieldLabel><input type="text" id="pos" defaultValue="0 %" /></Field>
            <Field $narrow><FieldLabel htmlFor="color">颜色:</FieldLabel><Preview id="color" $white /></Field>
            <Field><FieldLabel htmlFor="light">亮度:</FieldLabel></Field>
            <Field $slider>
              <Range type="range" id="light" defaultValue={64} />
              <input type="text" aria-label="亮度值" defaultValue="30 %" />
            </Field>
            <Field><FieldLabel htmlFor="alpha">透明度:</FieldLabel></Field>
            <Field $slider>
              <Range type="range" id="alpha" defaultValue={0} />
              <input type="text" aria-label="透明度值" defaultValue="0 %" />
            </Field>
          </PanelBody>
        </Panel>
      </Body>

      <Status>
        <Cell $w={36}><button aria-label="页面视图"><Pages /></button></Cell>
        <PageSelect $w={94}><select aria-label="页面"><option>页-1</option></select><Caret /></PageSelect>
        <Cell $w={35}><button aria-label="添加页面"><Plus w={2.200} /></button></Cell>
        <Cell $w={63}><PageTab>页-1</PageTab></Cell>
        <StatusRight>
          <FocusButton><Focus />专注</FocusButton>
          <button aria-label="播放"><PlayIcon /></button>
          <ZoomOut aria-label="缩小"><Minus /></ZoomOut>
          <ZoomRange $zoom type="range" aria-label="缩放" defaultValue={23} />
          <button aria-label="放大"><Plus w={2.200} /></button>
          <ZoomLevel>100%<Caret /></ZoomLevel>
          <button aria-label="全屏"><FullScreen /></button>
        </StatusRight>
      </Status>
      <Taskbar><Tasks /><Clock>11:21</Clock></Taskbar>

      <Pointer width="88" height="86" viewBox="0 0 88 86" aria-hidden="true">
        <path d="M10 10 85 83" stroke="#f00" strokeWidth="1.200" />
        <path d="M1 2l18 5-13 11z" fill="#f00" />
      </Pointer>
    </Shell>
  );
}
